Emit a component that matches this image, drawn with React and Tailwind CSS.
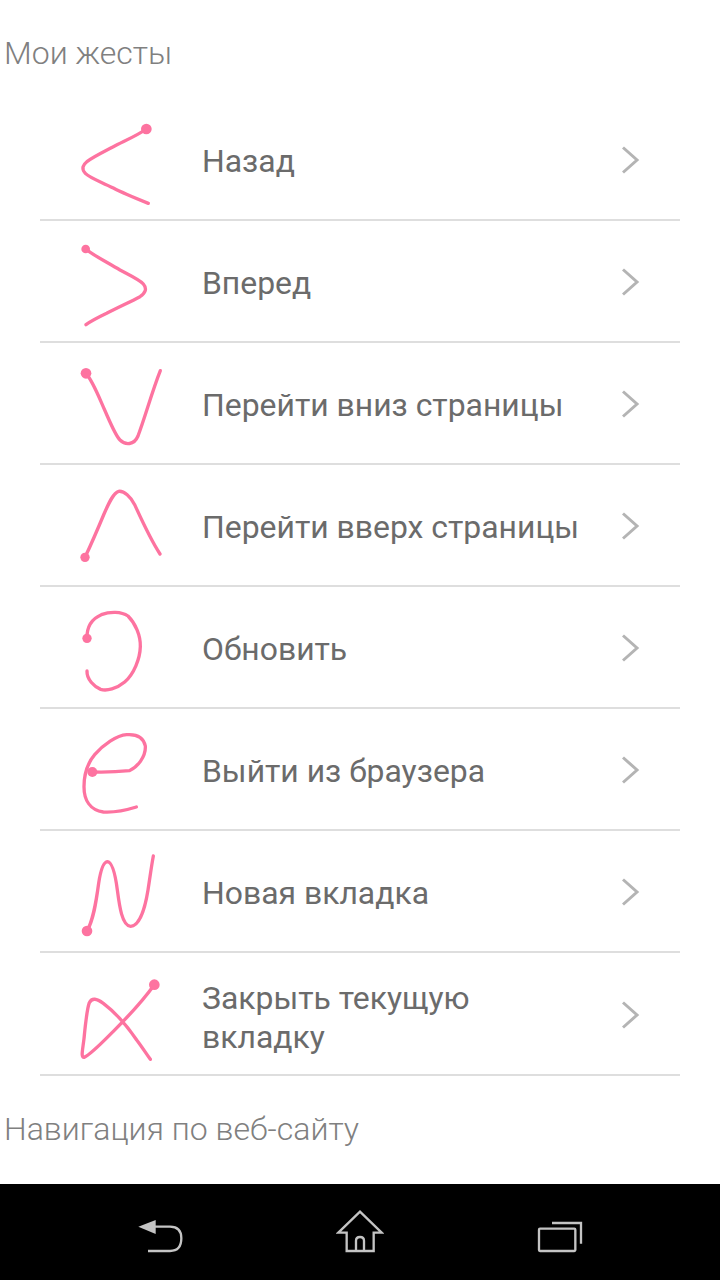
import React from 'react';

const gestures = [
  {
    label: 'Назад',
    view: '0 -3 360 363',
    path: 'M259 87 C230 108 190 124 160 140 C130 156 100 170 82 184 C70 194 62 206 76 220 C90 234 120 244 160 264 C190 280 230 296 265 310',
    dot: [259, 87, 16],
  },
  {
    label: 'Вперед',
    view: '0 363 360 363',
    path: 'M77 447 C100 466 140 486 180 510 C210 526 240 540 250 552 C262 566 256 580 240 590 C210 606 170 624 140 640 C115 652 95 662 78 674',
    dot: [77, 447, 13],
  },
  {
    label: 'Перейти вниз страницы',
    view: '0 729 360 363',
    path: 'M78 820 C100 846 116 890 134 930 C150 966 166 1006 180 1020 C196 1036 222 1036 234 1008 C256 950 276 875 301 812',
    dot: [78, 820, 16],
  },
  {
    label: 'Перейти вверх страницы',
    view: '0 -15 360 363',
    path: 'M75 262 C92 226 112 180 132 132 C146 100 160 68 176 64 C192 62 212 80 224 104 C246 152 270 206 300 252',
    dot: [75, 262, 14],
  },
  {
    label: 'Обновить',
    view: '0 351 360 363',
    path: 'M81 505 C80 470 96 446 124 434 C150 424 184 424 204 438 C226 460 242 496 241 530 C240 566 222 612 194 636 C170 656 140 664 122 658 C102 650 80 628 81 603',
    dot: [81, 505, 14],
  },
  {
    label: 'Выйти из браузера',
    view: '0 717 360 363',
    path: 'M97 906 C130 907 170 906 208 902 C232 892 258 860 256 828 C250 800 226 792 200 794 C170 796 130 824 104 854 C84 878 72 910 72 950 C72 990 90 1020 130 1026 C160 1028 200 1020 229 1011',
    dot: [97, 906, 15],
  },
  {
    label: 'Новая вкладка',
    view: '0 -27 360 363',
    path: 'M81 273 C100 240 108 190 116 130 C122 90 130 66 142 65 C156 66 166 104 172 150 C178 196 186 258 212 259 C240 258 256 200 264 150 C270 112 274 80 280 48',
    dot: [81, 273, 16],
  },
  {
    label: 'Закрыть текущую вкладку',
    view: '0 339 360 363',
    path: 'M283 434 C250 480 200 534 160 574 C130 604 92 644 72 652 C62 652 68 630 72 596 C76 556 80 510 88 488 C96 472 110 476 130 490 C170 520 200 556 230 600 C244 618 258 640 271 658',
    dot: [283, 434, 16],
    tall: true,
  },
];

const GestureRow = ({ item }) => (
  <div className={`flex items-center border-b-2 border-[#dedede] ${item.tall ? 'h-[123px]' : 'h-[122px]'}`}>
    <svg className="ml-5 h-[121px] w-[120px] shrink-0 self-start" viewBox={item.view} fill="none">
      <path d={item.path} stroke="#fd73a0" strokeWidth="10" strokeLinecap="round" strokeLinejoin="round" />
      <circle cx={item.dot[0]} cy={item.dot[1]} r={item.dot[2]} fill="#fd73a0" />
    </svg>
    <div className={`ml-[22px] w-[386px] text-[31.9px] leading-[39px] text-[#6b6b6b] ${item.tall ? 'pt-[9px]' : 'pt-[5px]'}`}>
      {item.label}
    </div>
    <svg className={`ml-auto mr-10 h-[32px] w-[20px] shrink-0 ${item.tall ? 'mt-[3px]' : 'mt-[2px]'}`} viewBox="0 0 20 32" fill="none">
      <path d="M3 3.5 L17 16 L3 28.5" stroke="#b4b4b4" strokeWidth="3" />
    </svg>
  </div>
);

const App = () => (
  <div className="flex h-[1280px] w-[720px] flex-col overflow-hidden bg-white font-['Roboto',sans-serif]">
    <div className="flex h-[99px] items-center px-[4px] pt-[6px] text-[32px] font-light text-[#808080]">Мои жесты</div>
    <div className="mx-10">
      {gestures.map((item) => (
        <GestureRow key={item.label} item={item} />
      ))}
    </div>
    <div className="flex flex-1 items-center px-[4px] pb-[2px] text-[32px] font-light text-[#808080]">Навигация по веб-сайту</div>
    <div className="grid h-24 grid-cols-3 items-center bg-black px-[60px]">
      <svg className="mx-auto h-12 w-12" viewBox="48 54 144 144" fill="none">
        <path d="M55 110 L107 90 V132 Z" fill="#c4c4c4" />
        <path d="M105 110 H150 Q184 110 184 145 Q184 183 150 183 H84" stroke="#c4c4c4" strokeWidth="7" />
      </svg>
      <svg className="mx-auto h-12 w-12" viewBox="648 54 144 144" fill="none">
        <path d="M655 128 L720 65 L785 128 H761 V183 H680 V128 Z" stroke="#c4c4c4" strokeWidth="7" strokeLinejoin="miter" />
        <path d="M708 183 V152 Q708 141 720 141 Q732 141 732 152 V183" stroke="#c4c4c4" strokeWidth="7" />
      </svg>
      <svg className="mx-auto h-12 w-12" viewBox="1248 54 144 144" fill="none">
        <rect x="1257" y="116" width="109" height="67" rx="3" stroke="#c4c4c4" strokeWidth="7" />
        <path d="M1296 99 H1383 V161" stroke="#c4c4c4" strokeWidth="7" />
      </svg>
    </div>
  </div>
);

export default App;
